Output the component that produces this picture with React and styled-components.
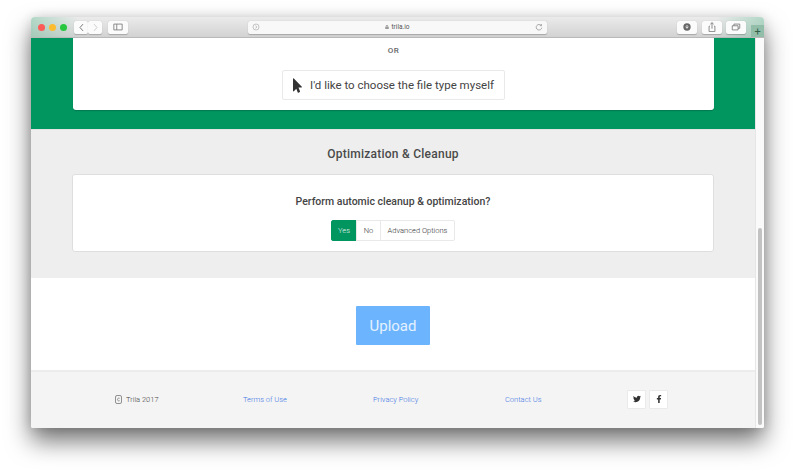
import React from 'react';
import styled, { createGlobalStyle } from 'styled-components';
import { FaTwitter, FaFacebookF, FaMousePointer, FaLock } from 'react-icons/fa';

const Global = createGlobalStyle`
  html, body { margin: 0; padding: 0; background: #fff; }
  body { font-family: "Roboto", "Liberation Sans", sans-serif; overflow: hidden; }
`;

const Desktop = styled.div`
  width: 800px;
  height: 474px;
  box-sizing: border-box;
  padding: 17px 36px 46px 31px;
`;

const Browser = styled.div`
  height: 411px;
  display: flex;
  flex-direction: column;
  border-radius: 4px 4px 2px 2px;
  overflow: hidden;
  background: #fff;
  box-shadow: 0 13px 24px rgba(0, 0, 0, 0.55), 0 0 12px rgba(0, 0, 0, 0.12);
`;

const Toolbar = styled.div`
  position: relative;
  height: 21px;
  flex: none;
  display: flex;
  align-items: center;
  box-sizing: border-box;
  padding: 0 18px 0 7px;
  border-bottom: 1px solid #b9b9b9;
  background:
    linear-gradient(90deg, rgba(100, 190, 150, 0.42), rgba(100, 190, 150, 0) 48px),
    linear-gradient(270deg, rgba(100, 190, 150, 0.42), rgba(100, 190, 150, 0) 48px),
    linear-gradient(#ebebeb, #d2d2d2);
`;

const Lights = styled.div`
  display: flex;
  gap: 4px;
  margin-right: 7px;
`;

const Light = styled.span`
  width: 7px;
  height: 7px;
  border-radius: 50%;
  background: ${p => p.$color};
`;

const ToolBtn = styled.div`
  height: 13px;
  width: ${p => p.$w || 20}px;
  margin-left: ${p => p.$ml || 0}px;
  flex: none;
  display: flex;
  align-items: center;
  justify-content: center;
  background: #fbfbfb;
  border-radius: 2px;
  box-shadow: 0 0.5px 1px rgba(0, 0, 0, 0.22);
  svg { display: block; }
`;

const UrlBar = styled.div`
  width: 299px;
  height: 13px;
  margin: 0 auto 0 120px;
  flex: none;
  display: flex;
  align-items: center;
  justify-content: space-between;
  box-sizing: border-box;
  padding: 0 4px;
  background: #f8f8f8;
  border-radius: 2px;
  box-shadow: 0 0.5px 1px rgba(0, 0, 0, 0.22);
`;

const Host = styled.span`
  display: flex;
  align-items: center;
  gap: 2px;
  font-size: 6.5px;
  color: #555;
  svg { width: 4px; height: 4px; color: #999; }
`;

const NewTab = styled.div`
  position: absolute;
  right: 0;
  bottom: 0;
  width: 13px;
  height: 12px;
  display: flex;
  align-items: center;
  justify-content: center;
  background: #92bda8;
  color: #2f5f48;
  font-size: 11px;
  line-height: 1;
`;

const Viewport = styled.div`
  flex: 1;
  display: flex;
  min-height: 0;
`;

const Page = styled.div`
  flex: 1;
  min-width: 0;
  display: flex;
  flex-direction: column;
`;

const Scrollbar = styled.div`
  width: 9px;
  flex: none;
  box-sizing: border-box;
  padding: 190px 2px 2px 2px;
  background: #fafafa;
  border-left: 1px solid #e6e6e6;
`;

const Thumb = styled.div`
  height: 197px;
  border-radius: 3px;
  background: #c2c2c2;
`;

const GreenBand = styled.section`
  height: 91px;
  flex: none;
  box-sizing: border-box;
  padding: 0 41px 19px 42px;
  background: #019560;
`;

const Card = styled.div`
  background: #fff;
  border-radius: 0 0 3px 3px;
  box-sizing: border-box;
  display: flex;
  flex-direction: column;
  align-items: center;
`;

const FileCard = styled(Card)`
  height: 72px;
  padding-top: 8px;
  box-shadow: 0 1px 1px rgba(0, 0, 0, 0.18);
`;

const Or = styled.div`
  font-size: 8px;
  line-height: 10px;
  font-weight: 500;
  color: #666;
  letter-spacing: 0.4px;
`;

const ChooseBtn = styled.div`
  margin-top: 14px;
  width: 223px;
  height: 30px;
  box-sizing: border-box;
  display: flex;
  align-items: center;
  padding-left: 10px;
  gap: 8px;
  border: 1px solid #e9e9e9;
  border-radius: 2px;
  font-size: 11.5px;
  color: #444;
  white-space: nowrap;
  svg { width: 9px; height: 15px; color: #333; flex: none; }
`;

const GrayBand = styled.section`
  height: 149px;
  flex: none;
  box-sizing: border-box;
  padding: 0 41px;
  background: #eeeeee;
  border-top: 1px solid #e4e4e4;
`;

const SectionTitle = styled.h2`
  margin: 0;
  height: 44px;
  display: flex;
  align-items: center;
  justify-content: center;
  padding-top: 3px;
  box-sizing: border-box;
  font-size: 12px;
  font-weight: 500;
  color: #4a4a4a;
  letter-spacing: 0.25px;
`;

const OptCard = styled(Card)`
  height: 78px;
  padding-top: 20px;
  border: 1px solid #dedede;
  border-radius: 3px;
`;

const Question = styled.div`
  font-size: 10.5px;
  line-height: 13px;
  font-weight: 500;
  color: #444;
`;

const Segments = styled.div`
  margin-top: 12px;
  display: flex;
  height: 21px;
`;

const Segment = styled.div`
  display: flex;
  align-items: center;
  justify-content: center;
  width: ${p => p.$w}px;
  box-sizing: border-box;
  font-size: 7.5px;
  font-weight: 300;
  color: ${p => (p.$active ? '#e6f5ee' : '#333')};
  background: ${p => (p.$active ? '#019560' : '#fff')};
  border: 1px solid ${p => (p.$active ? '#019560' : '#e9e9e9')};
  margin-left: ${p => (p.$active ? 0 : -1)}px;
  border-radius: ${p => (p.$active ? '2px 0 0 2px' : p.$last ? '0 2px 2px 0' : 0)};
`;

const UploadBand = styled.section`
  height: 92px;
  flex: none;
  display: flex;
  align-items: center;
  justify-content: center;
  padding-top: 3px;
  box-sizing: border-box;
  background: #fff;
`;

const UploadBtn = styled.div`
  width: 74px;
  height: 39px;
  display: flex;
  align-items: center;
  justify-content: center;
  border-radius: 1px;
  background: #6cb5fe;
  color: #e4f1ff;
  font-size: 15px;
`;

const Footer = styled.footer`
  flex: 1;
  display: grid;
  grid-template-columns: 128px 130px 132px 122px auto;
  align-items: center;
  box-sizing: border-box;
  padding: 0 0 2px 84px;
  background: #f4f4f4;
  border-top: 2px solid #ececec;
  font-size: 7.5px;
  font-weight: 300;
`;

const Cell = styled.div`
  display: flex;
  align-items: center;
  gap: 4px;
  color: ${p => (p.$link ? '#3f76e4' : '#444')};
`;

const Social = styled.div`
  display: flex;
  gap: 3px;
`;

const SocialBtn = styled.div`
  width: 19px;
  height: 19px;
  display: flex;
  align-items: center;
  justify-content: center;
  background: #fff;
  border: 1px solid #eaeaea;
  border-radius: 1px;
  box-sizing: border-box;
  color: #333;
  svg { width: 8px; height: 8px; }
`;

const ToolIcon = ({ children, size = 9 }) => (
  <svg width={size} height={size} viewBox="0 0 12 12" fill="none" stroke="#777" strokeWidth="1">
    {children}
  </svg>
);

const App = () => (
  <>
    <Global />
    <Desktop>
      <Browser>
        <Toolbar>
          <Lights>
            <Light $color="#fc5b57" />
            <Light $color="#fdbc2e" />
            <Light $color="#27c840" />
          </Lights>
          <ToolBtn $w={14}>
            <ToolIcon><path d="M8 1.5 4 6l4 4.5" strokeWidth="1.3" /></ToolIcon>
          </ToolBtn>
          <ToolBtn $w={14}>
            <ToolIcon><path d="M4 1.5 8 6l-4 4.5" stroke="#ccc" strokeWidth="1.3" /></ToolIcon>
          </ToolBtn>
          <ToolBtn $w={20} $ml={6}>
            <ToolIcon size={10}>
              <path d="M1 2.5h10v7H1zM4.5 2.5v7" />
            </ToolIcon>
          </ToolBtn>
          <UrlBar>
            <ToolIcon size={8}>
              <circle cx="6" cy="6" r="4.5" stroke="#aaa" />
              <path d="M5 4l2.5 2L5 8" stroke="#aaa" />
            </ToolIcon>
            <Host><FaLock />trila.io</Host>
            <ToolIcon size={8}>
              <path d="M9.5 4A4.2 4.2 0 1 0 10.2 7M9.7 1.5V4H7.2" stroke="#888" />
            </ToolIcon>
          </UrlBar>
          <ToolBtn $w={20}>
            <svg width="8" height="8" viewBox="0 0 12 12">
              <circle cx="6" cy="6" r="5.5" fill="#666" />
              <path d="M6 3v4M4 5.5 6 8l2-2.5" stroke="#fff" strokeWidth="1.2" fill="none" />
            </svg>
          </ToolBtn>
          <ToolBtn $w={20} $ml={5}>
            <ToolIcon size={10}><path d="M3.5 5H2.5v6.5h7V5h-1M6 8V.8M4 2.6 6 .8l2 1.8" /></ToolIcon>
          </ToolBtn>
          <ToolBtn $w={20} $ml={4}>
            <ToolIcon size={10}><path d="M1.5 4.5h7v5h-7zM3.5 4.5V2.5h7v5H8.5" /></ToolIcon>
          </ToolBtn>
          <NewTab>+</NewTab>
        </Toolbar>
        <Viewport>
          <Page>
            <GreenBand>
              <FileCard>
                <Or>OR</Or>
                <ChooseBtn>
                  <FaMousePointer />
                  I'd like to choose the file type myself
                </ChooseBtn>
              </FileCard>
            </GreenBand>
            <GrayBand>
              <SectionTitle>Optimization &amp; Cleanup</SectionTitle>
              <OptCard>
                <Question>Perform automic cleanup &amp; optimization?</Question>
                <Segments>
                  <Segment $active $w={26}>Yes</Segment>
                  <Segment $w={25}>No</Segment>
                  <Segment $w={75} $last>Advanced Options</Segment>
                </Segments>
              </OptCard>
            </GrayBand>
            <UploadBand>
              <UploadBtn>Upload</UploadBtn>
            </UploadBand>
            <Footer>
              <Cell>
                <svg width="7" height="9" viewBox="0 0 7 9" fill="none" stroke="#777" strokeWidth="0.8">
                  <rect x="0.5" y="0.5" width="6" height="8" rx="1.5" />
                  <path d="M4.6 3.3A1.4 1.4 0 1 0 4.6 5.7" />
                </svg>
                Trila 2017
              </Cell>
              <Cell $link>Terms of Use</Cell>
              <Cell $link>Privacy Policy</Cell>
              <Cell $link>Contact Us</Cell>
              <Social>
                <SocialBtn><FaTwitter /></SocialBtn>
                <SocialBtn><FaFacebookF /></SocialBtn>
              </Social>
            </Footer>
          </Page>
          <Scrollbar><Thumb /></Scrollbar>
        </Viewport>
      </Browser>
    </Desktop>
  </>
);

export default App;
